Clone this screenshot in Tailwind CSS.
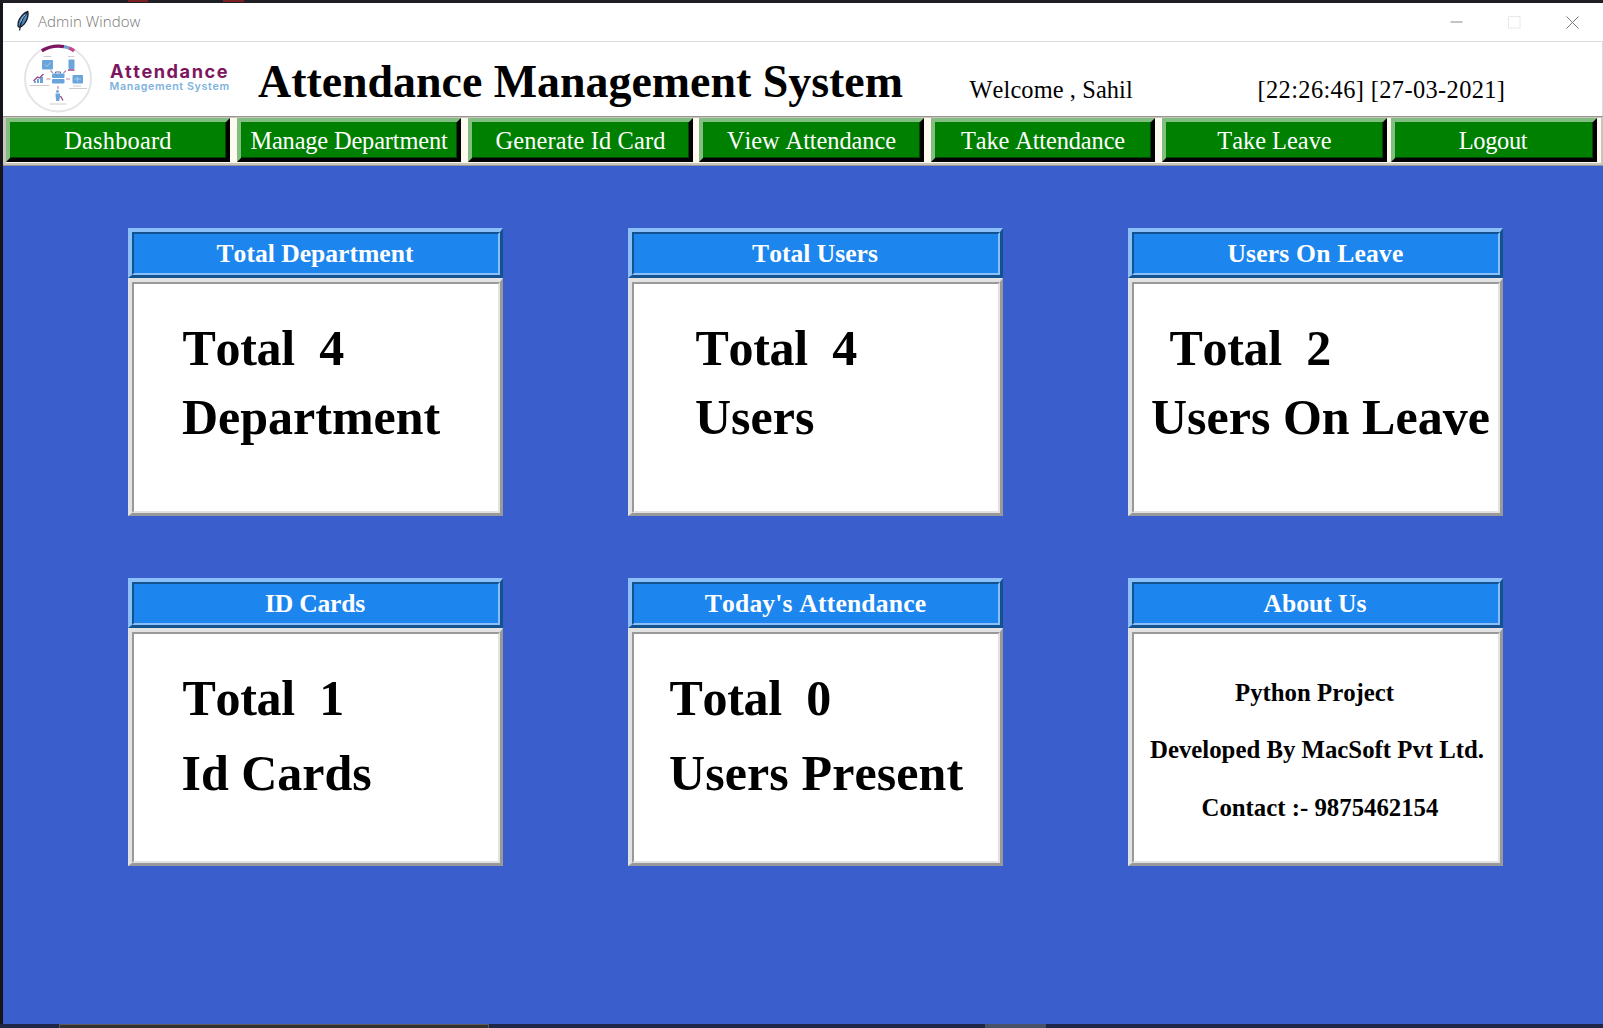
<!DOCTYPE html>
<html lang="en">
<head>
<meta charset="utf-8">
<title>Admin Window</title>
<script src="https://cdn.jsdelivr.net/npm/@tailwindcss/browser@4"></script>
</head>
<body class="w-[1603px] h-[1028px] overflow-hidden bg-[#15151b] flex flex-col font-['Liberation_Serif','Times_New_Roman',serif] [font-kerning:none]">

<!-- desktop strip above the window -->
<div class="h-[3px] shrink-0 flex bg-[#1e1e25]">
  <div class="ml-[128px] w-[20px] h-[2px] bg-[#7c1f22]"></div>
  <div class="ml-[75px] w-[21px] h-[2px] bg-[#7c1f22]"></div>
</div>

<div class="ml-[3px] h-[1021px] shrink-0 flex flex-col bg-[#3a5fcd]">
  <!-- title bar -->
  <div class="h-[39px] shrink-0 bg-white border-b border-[#dcdcdc] flex items-center">
    <svg class="ml-[13px] mb-[2px] w-[14px] h-[22px] shrink-0" viewBox="0 0 14 22">
      <path d="M11.8 1.5C8 2.5 3.6 7 2.2 12.5L2 16l1.2 1.2C7 16.6 10.4 12 11.6 7.500C12.200 5 12.300 3 11.800 1.500Z" fill="#4f86bd" stroke="#16202c" stroke-width="1.300"/>
      <path d="M10.800 3C7 7 4.500 12 3.600 20.500" fill="none" stroke="#16202c" stroke-width="1.200"/>
      <path d="M9.500 4.500C7 7 5.500 9 4.500 12" fill="none" stroke="#a9cbe8" stroke-width="1"/>
    </svg>
    <span class="ml-[8px] mb-[2px] text-[15px] leading-5 tracking-[0.080px] font-light text-[#757575] font-['Open_Sans','Noto_Sans',sans-serif]">Admin Window</span>
    <div class="ml-auto mr-[24px] flex items-center gap-[45px]">
      <svg class="w-[13px] h-[13px]" viewBox="0 0 13 13"><path d="M0.500 6h12" stroke="#8a8a8a" fill="none"/></svg>
      <svg class="w-[13px] h-[13px]" viewBox="0 0 13 13"><path d="M0.500 0.500h11.500v11.500h-11.500z" stroke="#e8e8e8" fill="none"/></svg>
      <svg class="w-[13px] h-[13px]" viewBox="0 0 13 13"><path d="M0.500 0.500l12 12M12.500 0.500l-12 12" stroke="#7a7a7a" fill="none"/></svg>
    </div>
  </div>

  <!-- header -->
  <div class="h-[74px] shrink-0 bg-white border-r border-[#dcdcdc] flex items-start">
    <svg class="ml-[17px] w-[220px] h-[74px] shrink-0" viewBox="20 42 220 74">
      <circle cx="58" cy="78.500" r="33" fill="#fff" stroke="#e4e5e8" stroke-width="2"/>
      <path d="M41.800 50.800A32.500 32.500 0 0 1 64 46.600" fill="none" stroke="#7d1560" stroke-width="3.400"/>
      <path d="M64 46.600A32.500 32.500 0 0 1 69 48" fill="none" stroke="#6f9fd0" stroke-width="3.400"/>
      <path d="M69 48A32.500 32.500 0 0 1 74.200 50.800" fill="none" stroke="#c04a86" stroke-width="3.400"/>
      <g stroke="#b98aab" stroke-width="1.200">
        <path d="M50.500 70.500l2.500 2.500M66 70.500l-2.500 2.500M46.500 79h4M66 79h4M58 86v3"/>
      </g>
      <g fill="#69a5da">
        <rect x="42" y="60" width="11" height="9.500" rx="1"/>
        <rect x="68.500" y="59.500" width="6" height="9.500" rx="1"/>
        <rect x="52" y="73.500" width="12.500" height="4.500" rx="1"/>
        <rect x="52" y="79" width="12.500" height="4.500" rx="1"/>
        <rect x="72.500" y="75" width="10.500" height="8.500" rx="1"/>
        <path d="M34 83v-2h2v2zM37 83v-4h2v4zM40 83v-6h3v6z"/>
        <circle cx="57.500" cy="91.500" r="1.400"/>
        <path d="M55.500 93.500h4.500v3.500l-.8 4h-3l-.5-4z"/>
      </g>
      <path d="M55.500 73.500v-1.500h5v1.500" fill="none" stroke="#5a6fa8" stroke-width="1"/>
      <path d="M45 64.500l2 2 3.500-4M74.500 79h6.500M77.500 77v5" fill="none" stroke="#a9cbe8" stroke-width="1"/>
      <path d="M33.500 81l4-4 2 1L43.500 74M68 70h6.500M60.500 96l2.500 4.500" fill="none" stroke="#9c4584" stroke-width="1.300"/>
      <path d="M43.500 56.500h8M68 56.500h6.500M29.500 85.500h20M73 86h8M69 88.500h18M49.500 104h17" stroke="#cfcbce" stroke-width="1.200"/>
      <text x="110" y="77.500" textLength="117.500" lengthAdjust="spacing" font-family="Inter, sans-serif" font-weight="700" font-size="18.200" fill="#7d1560">Attendance</text>
      <text x="109.500" y="90" textLength="119.500" lengthAdjust="spacing" font-family="Inter, sans-serif" font-weight="600" font-size="10.700" fill="#7db3de">Management System</text>
    </svg>
    <h1 class="ml-[18px] mt-[16px] w-[690px] shrink-0 text-[45.900px] leading-[48px] font-bold whitespace-nowrap text-black">Attendance Management System</h1>
    <span class="ml-[21.500px] mt-[34px] w-[288px] shrink-0 text-[24.400px] leading-[28px] tracking-[0.100px] whitespace-nowrap text-black">Welcome , Sahil</span>
    <span class="mt-[34px] text-[24.400px] leading-[28px] tracking-[0.380px] whitespace-nowrap text-black">[22:26:46] [27-03-2021]</span>
  </div>

  <!-- navigation -->
  <nav class="h-[50px] shrink-0 border-y border-[#98948e] bg-[#c9c6c0] flex items-start pt-px pl-[3px] pr-[2px]">
    <div class="h-[45px] flex-1 bg-[#fffaf0] flex items-start text-[24.400px] leading-[34px] text-white text-center whitespace-nowrap">
      <a class="w-[224px] mr-[7px] h-[44px] bg-[#008000] border-[4px] border-t-[#82be82] border-l-[#82be82] border-b-black border-r-black shadow-[inset_-1px_-1px_0_#004400] pt-[2px] tracking-[0.200px]">Dashboard</a>
      <a class="w-[224px] mr-[7px] h-[44px] bg-[#008000] border-[4px] border-t-[#82be82] border-l-[#82be82] border-b-black border-r-black shadow-[inset_-1px_-1px_0_#004400] pt-[2px] tracking-[-0.150px]">Manage Department</a>
      <a class="w-[225px] mr-[6px] h-[44px] bg-[#008000] border-[4px] border-t-[#82be82] border-l-[#82be82] border-b-black border-r-black shadow-[inset_-1px_-1px_0_#004400] pt-[2px] tracking-[0.130px]">Generate Id Card</a>
      <a class="w-[225px] mr-[7px] h-[44px] bg-[#008000] border-[4px] border-t-[#82be82] border-l-[#82be82] border-b-black border-r-black shadow-[inset_-1px_-1px_0_#004400] pt-[2px] tracking-[-0.070px]">View Attendance</a>
      <a class="w-[224px] mr-[7px] h-[44px] bg-[#008000] border-[4px] border-t-[#82be82] border-l-[#82be82] border-b-black border-r-black shadow-[inset_-1px_-1px_0_#004400] pt-[2px] tracking-[-0.120px]">Take Attendance</a>
      <a class="w-[225px] mr-[4px] h-[44px] bg-[#008000] border-[4px] border-t-[#82be82] border-l-[#82be82] border-b-black border-r-black shadow-[inset_-1px_-1px_0_#004400] pt-[2px]">Take Leave</a>
      <a class="w-[206px] h-[44px] bg-[#008000] border-[4px] border-t-[#82be82] border-l-[#82be82] border-b-black border-r-black shadow-[inset_-1px_-1px_0_#004400] pt-[2px] pr-[2px] tracking-[-0.300px]">Logout</a>
    </div>
  </nav>

  <!-- dashboard cards -->
  <main class="pt-[62px] pl-[125px] grid grid-cols-[375px_375px_375px] gap-x-[125px] gap-y-[62px] text-black font-bold">
    <section>
      <div class="h-[50px] border-t-4 border-l-4 border-b-[3px] border-r-[3px] border-t-[#8abffa] border-l-[#8abffa] border-b-[#11528f] border-r-[#11528f]">
        <h2 class="h-full bg-[#1c86ee] border-2 border-t-[#11528f] border-l-[#11528f] border-b-[#8abffa] border-r-[#8abffa] pr-[2px] text-white text-center text-[25.600px] leading-[39px]">Total Department</h2>
      </div>
      <div class="h-[238px] border-t-4 border-l-4 border-b-[3px] border-r-[3px] border-t-[#e2e2e2] border-l-[#e2e2e2] border-b-[#999] border-r-[#999]">
        <div class="h-full bg-white border-2 border-t-[#999] border-l-[#999] border-b-[#e2e2e2] border-r-[#e2e2e2] pt-[36px] text-[50px] leading-[56px]">
          <p class="whitespace-pre pl-[48.500px] tracking-[-0.300px]">Total  4</p>
          <p class="whitespace-pre pl-[48px] mt-[13px]">Department</p>
        </div>
      </div>
    </section>
    <section>
      <div class="h-[50px] border-t-4 border-l-4 border-b-[3px] border-r-[3px] border-t-[#8abffa] border-l-[#8abffa] border-b-[#11528f] border-r-[#11528f]">
        <h2 class="h-full bg-[#1c86ee] border-2 border-t-[#11528f] border-l-[#11528f] border-b-[#8abffa] border-r-[#8abffa] pr-[2px] text-white text-center text-[25.600px] leading-[39px]">Total Users</h2>
      </div>
      <div class="h-[238px] border-t-4 border-l-4 border-b-[3px] border-r-[3px] border-t-[#e2e2e2] border-l-[#e2e2e2] border-b-[#999] border-r-[#999]">
        <div class="h-full bg-white border-2 border-t-[#999] border-l-[#999] border-b-[#e2e2e2] border-r-[#e2e2e2] pt-[36px] text-[50px] leading-[56px]">
          <p class="whitespace-pre pl-[61.500px] tracking-[-0.300px]">Total  4</p>
          <p class="whitespace-pre pl-[61px] mt-[13px]">Users</p>
        </div>
      </div>
    </section>
    <section>
      <div class="h-[50px] border-t-4 border-l-4 border-b-[3px] border-r-[3px] border-t-[#8abffa] border-l-[#8abffa] border-b-[#11528f] border-r-[#11528f]">
        <h2 class="h-full bg-[#1c86ee] border-2 border-t-[#11528f] border-l-[#11528f] border-b-[#8abffa] border-r-[#8abffa] pr-px text-white text-center text-[25.600px] leading-[39px] tracking-[0.200px]">Users On Leave</h2>
      </div>
      <div class="h-[238px] border-t-4 border-l-4 border-b-[3px] border-r-[3px] border-t-[#e2e2e2] border-l-[#e2e2e2] border-b-[#999] border-r-[#999]">
        <div class="h-full bg-white border-2 border-t-[#999] border-l-[#999] border-b-[#e2e2e2] border-r-[#e2e2e2] pt-[36px] text-[50px] leading-[56px]">
          <p class="whitespace-pre pl-[35.500px] tracking-[-0.300px]">Total  2</p>
          <p class="whitespace-pre pl-[17px] mt-[13px]">Users On Leave</p>
        </div>
      </div>
    </section>
    <section>
      <div class="h-[50px] border-t-4 border-l-4 border-b-[3px] border-r-[3px] border-t-[#8abffa] border-l-[#8abffa] border-b-[#11528f] border-r-[#11528f]">
        <h2 class="h-full bg-[#1c86ee] border-2 border-t-[#11528f] border-l-[#11528f] border-b-[#8abffa] border-r-[#8abffa] pr-[2px] text-white text-center text-[25.600px] leading-[39px] tracking-[-0.200px]">ID Cards</h2>
      </div>
      <div class="h-[238px] border-t-4 border-l-4 border-b-[3px] border-r-[3px] border-t-[#e2e2e2] border-l-[#e2e2e2] border-b-[#999] border-r-[#999]">
        <div class="h-full bg-white border-2 border-t-[#999] border-l-[#999] border-b-[#e2e2e2] border-r-[#e2e2e2] pt-[36px] text-[50px] leading-[56px]">
          <p class="whitespace-pre pl-[48.500px] tracking-[-0.300px]">Total  1</p>
          <p class="whitespace-pre pl-[47.500px] mt-[19px]">Id Cards</p>
        </div>
      </div>
    </section>
    <section>
      <div class="h-[50px] border-t-4 border-l-4 border-b-[3px] border-r-[3px] border-t-[#8abffa] border-l-[#8abffa] border-b-[#11528f] border-r-[#11528f]">
        <h2 class="h-full bg-[#1c86ee] border-2 border-t-[#11528f] border-l-[#11528f] border-b-[#8abffa] border-r-[#8abffa] pr-px text-white text-center text-[25.600px] leading-[39px] tracking-[0.180px]">Today's Attendance</h2>
      </div>
      <div class="h-[238px] border-t-4 border-l-4 border-b-[3px] border-r-[3px] border-t-[#e2e2e2] border-l-[#e2e2e2] border-b-[#999] border-r-[#999]">
        <div class="h-full bg-white border-2 border-t-[#999] border-l-[#999] border-b-[#e2e2e2] border-r-[#e2e2e2] pt-[36px] text-[50px] leading-[56px]">
          <p class="whitespace-pre pl-[35.500px] tracking-[-0.300px]">Total  0</p>
          <p class="whitespace-pre pl-[35px] mt-[19px] tracking-[0.100px]">Users Present</p>
        </div>
      </div>
    </section>
    <section>
      <div class="h-[50px] border-t-4 border-l-4 border-b-[3px] border-r-[3px] border-t-[#8abffa] border-l-[#8abffa] border-b-[#11528f] border-r-[#11528f]">
        <h2 class="h-full bg-[#1c86ee] border-2 border-t-[#11528f] border-l-[#11528f] border-b-[#8abffa] border-r-[#8abffa] pr-[2px] text-white text-center text-[25.600px] leading-[39px]">About Us</h2>
      </div>
      <div class="h-[238px] border-t-4 border-l-4 border-b-[3px] border-r-[3px] border-t-[#e2e2e2] border-l-[#e2e2e2] border-b-[#999] border-r-[#999]">
        <div class="h-full bg-white border-2 border-t-[#999] border-l-[#999] border-b-[#e2e2e2] border-r-[#e2e2e2] pt-[30px] text-[24.800px] leading-[57.300px] whitespace-nowrap">
          <p class="pl-[101px]">Python Project</p>
          <p class="pl-[16px]">Developed By MacSoft Pvt Ltd.</p>
          <p class="pl-[67.500px]">Contact :- 9875462154</p>
        </div>
      </div>
    </section>
  </main>
</div>

<!-- taskbar edge -->
<div class="h-[4px] shrink-0 flex bg-[#1f2748]">
  <div class="ml-[59px] w-[430px] bg-[#33302e] border-t border-x border-[#5b5b5b]"></div>
  <div class="ml-[496px] w-[61px] bg-[#4a5068]"></div>
</div>
</body>
</html>
